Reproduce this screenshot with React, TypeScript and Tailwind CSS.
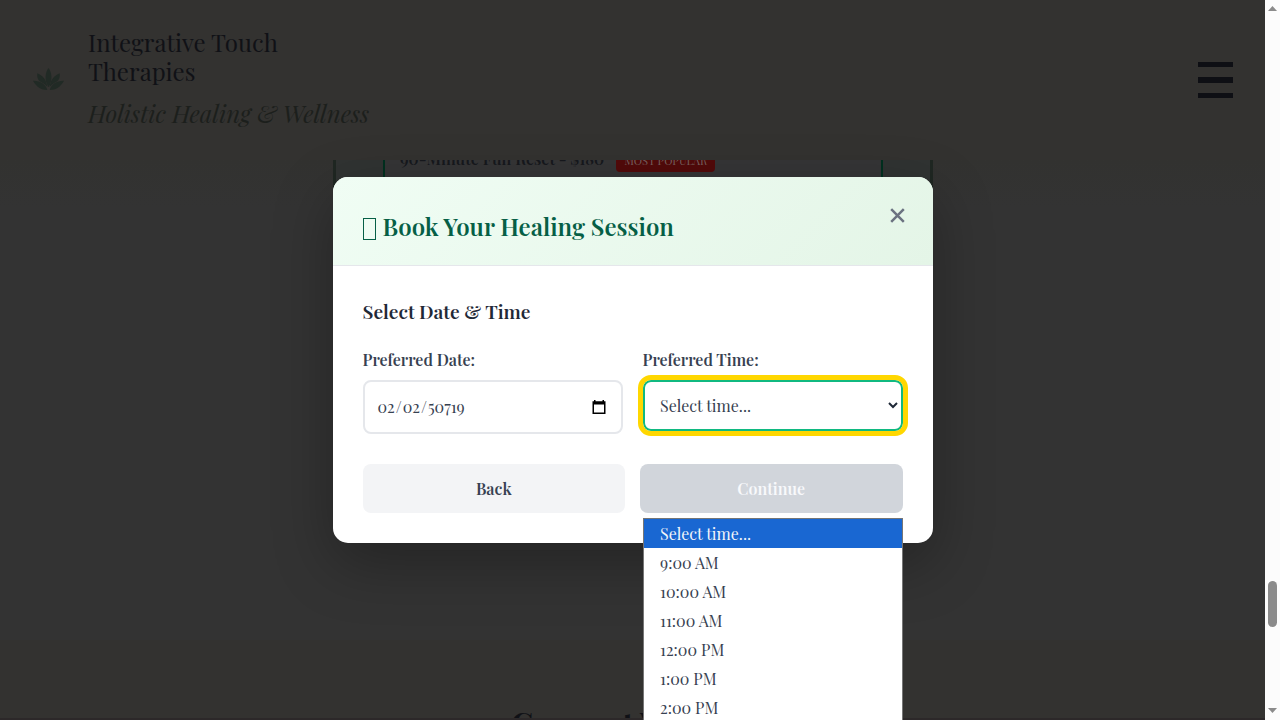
import React from "react";

const times = ["Select time...", "9:00 AM", "10:00 AM", "11:00 AM", "12:00 PM", "1:00 PM", "2:00 PM"];

function Lotus() {
  return (
    <svg viewBox="0 0 32 24" className="mb-px h-6 w-8 shrink-0" fill="#212a25">
      <path d="M16.500 0C13.300 4.500 12 11 16.300 19h.4C21 11 19.700 4.500 16.500 0Z" />
      <path d="M5.300 5.200c-.4 4 .4 6.500 2.700 8.300 2.800 1 5.200 2.900 7.300 5.500C14.800 12.300 11 7.500 5.300 5.200Z" />
      <path d="M27.700 5.200c.4 4-.4 6.500-2.700 8.300-2.800 1-5.200 2.900-7.300 5.500C18.200 12.300 22 7.500 27.700 5.200Z" />
      <path d="M1 12.800c3.500 6.300 8 9.200 14.300 9.200C14 16.500 8 12.500 1 12.800Z" />
      <path d="M32 12.800c-3.500 6.300-8 9.200-14.300 9.200C19 16.500 25 12.500 32 12.800Z" />
    </svg>
  );
}

function Header() {
  return (
    <header className="relative z-10 flex h-40 shrink-0 items-center justify-between bg-[#333230] px-8">
      <div className="flex items-center gap-6">
        <Lotus />
        <div>
          <div className="text-2xl leading-[29px] text-[#101116]">
            <div>Integrative Touch</div>
            <div>Therapies</div>
          </div>
          <div className="mt-2 text-2xl leading-[38px] text-[#1c1f1c] italic">Holistic Healing &amp; Wellness</div>
        </div>
      </div>
      <div className="flex h-9 w-[35px] flex-col justify-between">
        <span className="h-[5px] bg-[#0e0f14]" />
        <span className="h-[6px] bg-[#0e0f14]" />
        <span className="h-[5px] bg-[#0e0f14]" />
      </div>
    </header>
  );
}

function PageContent() {
  return (
    <main className="flex min-h-0 flex-1 flex-col items-center">
      <section className="flex h-[480px] w-full shrink-0 justify-center bg-linear-to-b from-[#323230] via-[#333333] via-10% to-[#333333]">
        <div className="h-[300px] w-[600px] border-x-[3px] border-[#1f2722] bg-[#303332] px-[47px]">
          <div className="h-full border-x-2 border-[#00301f] bg-[#353536] pl-[15.500px]">
            <div className="-mt-3 flex items-start gap-3">
              <span className="text-base leading-[22px] font-semibold whitespace-nowrap text-[#16181d]">90-Minute Full Reset - $180</span>
              <span className="h-6 rounded-[4px] bg-[#520a0a] px-2 text-[11.200px] leading-[25px] whitespace-nowrap text-[#77605f]">MOST POPULAR</span>
            </div>
          </div>
        </div>
      </section>
      <section className="flex h-20 w-full shrink-0 justify-center overflow-hidden bg-[#333230] pt-[62px]">
        <h2 className="h-[18px] w-full overflow-hidden border-b-2 border-[#2c2829] text-center text-[32px] leading-[42px] font-bold text-[#101116]">Connect With Us</h2>
      </section>
    </main>
  );
}

function TimeMenu() {
  return (
    <ul className="absolute top-[138px] left-0 z-30 w-[260px] border border-[#767676] bg-white text-base leading-[29px] text-[#374151]">
      {times.map((time, index) => (
        <li key={time} className={index === 0 ? "h-[29px] bg-[#1967d2] pl-[16.500px] text-[#f3f5f9]" : "h-[29px] pl-[16.500px]"}>
          {time}
        </li>
      ))}
    </ul>
  );
}

function Modal() {
  return (
    <div className="w-[600px] rounded-[15px] bg-white shadow-[0_20px_60px_rgba(0,0,0,0.3)]">
      <div className="flex h-[89px] items-start justify-between rounded-t-[15px] border-b border-[#e5e7eb] bg-linear-135 from-[#f0fdf4] to-[#e4f5e7] pt-[30px] pr-7 pl-[30px]">
        <h2 className="flex items-center gap-[7px] text-2xl leading-[38px] font-semibold text-[#065f46]">
          <span className="mt-1.5 h-[22px] w-[13px] border border-[#065f46]" />
          Book Your Healing Session
        </h2>
        <svg viewBox="0 0 15 15" className="mt-[1px] size-[15px]" stroke="#6b7280" strokeWidth="2.500">
          <path d="M1.200 1.200l12.600 12.600M13.800 1.200L1.200 13.800" />
        </svg>
      </div>
      <div className="p-[30px]">
        <h3 className="text-[19.200px] leading-[30px] font-semibold text-[#1f2937]">Select Date &amp; Time</h3>
        <div className="mt-[22px] grid h-[86px] grid-cols-2 items-start gap-5 text-[#374151]">
          <div>
            <div className="h-8 text-base leading-6 font-semibold">Preferred Date:</div>
            <div className="flex h-[54px] items-center justify-between rounded-lg border-2 border-[#e5e7eb] px-3 text-base">
              <span className="flex">
                <span className="px-px">02</span>/<span className="px-px">02</span>/<span className="px-px">50719</span>
              </span>
              <svg viewBox="0 0 14 14" className="mr-[3px] size-[14px]">
                <path d="M2 0h1.500v1.300h7V0H12v1.300h1.500V14H.5V1.300H2zM2 4.500v8h10v-8z" fill="#000" fillRule="evenodd" />
              </svg>
            </div>
          </div>
          <div className="relative">
            <div className="h-8 text-base leading-6 font-semibold">Preferred Time:</div>
            <div className="relative">
              <div className="flex h-[51px] items-center justify-between rounded-lg border-2 border-[#10b981] pr-[3px] pl-[15.500px] text-base outline-[5px] outline-[#ffd700]">
                <span>Select time...</span>
                <svg viewBox="0 0 10 7" className="w-[10px]" fill="none" stroke="#1f2937" strokeWidth="2">
                  <path d="M1 1l4 4 4-4" />
                </svg>
              </div>
              <TimeMenu />
            </div>
          </div>
        </div>
        <div className="mt-[30px] grid grid-cols-2 gap-[15px] text-base font-semibold">
          <button className="h-[49px] rounded-lg bg-[#f3f4f6] text-[#374151]">Back</button>
          <button className="h-[49px] rounded-lg bg-[#d1d5db] text-[#f8f9fb]">Continue</button>
        </div>
      </div>
    </div>
  );
}

function Scrollbar() {
  return (
    <div className="flex w-[15px] flex-col items-center bg-[#fcfcfc] pt-[6px] pb-[7px]">
      <svg viewBox="0 0 9 5" className="h-[5px] w-[9px]" fill="#8b8b8b"><path d="M4.500 0L9 5H0z" /></svg>
      <div className="mt-[570px] h-[46px] w-[9px] rounded-full bg-[#8b8b8b]" />
      <svg viewBox="0 0 9 5" className="mt-auto h-[5px] w-[9px]" fill="#8b8b8b"><path d="M0 0h9L4.500 5z" /></svg>
    </div>
  );
}

export default function App() {
  return (
    <div className="relative flex h-[720px] w-[1280px] overflow-hidden bg-[#333230] font-['Playfair_Display','Liberation_Serif',serif]">
      <div className="flex w-[1265px] flex-col">
        <Header />
        <PageContent />
      </div>
      <Scrollbar />
      <div className="absolute inset-y-0 left-0 z-20 flex w-[1265px] items-center justify-center">
        <Modal />
      </div>
    </div>
  );
}
